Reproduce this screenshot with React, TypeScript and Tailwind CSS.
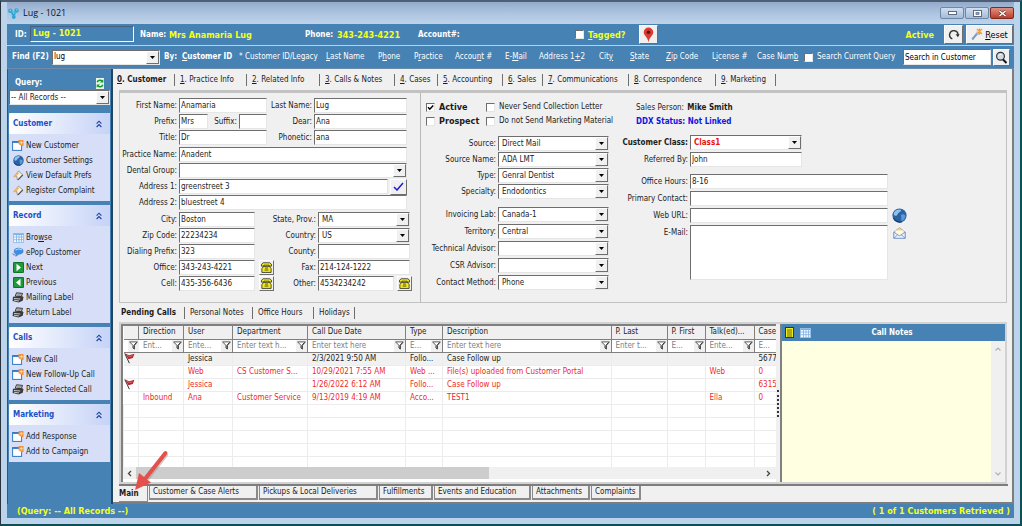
import { useId, type ReactNode } from "react";
import clsx from "clsx";

// "&" marks the accelerator key of a caption, as in "&Customer ID"
function Caption({ text }: { text: string }) {
  const at = text.indexOf("&");
  if (at < 0 || text[at + 1] === " ") return <>{text}</>;
  return (
    <>
      {text.slice(0, at)}
      <span className="underline">{text[at + 1]}</span>
      {text.slice(at + 2)}
    </>
  );
}

const sunken =
  "border border-t-[#6e6e6e] border-l-[#6e6e6e] border-r-[#e6e6e6] border-b-[#e6e6e6] bg-white";
const raised =
  "border border-t-white border-l-white border-r-[#6e6e6e] border-b-[#6e6e6e] bg-[#f0f0f0]";

type FieldProps = {
  label: string;
  value?: string;
  labelClass: string;
  boxClass: string;
  select?: boolean;
  bold?: boolean;
};

function SelectBox({
  id,
  value = "",
  className,
  textClass,
}: {
  id: string;
  value?: string;
  className: string;
  textClass?: string;
}) {
  return (
    <div className={clsx("relative h-[15px] shrink-0", sunken, className)}>
      <select
        id={id}
        defaultValue={value}
        className={clsx(
          "block h-full w-full appearance-none bg-transparent pr-3.5 outline-none",
          textClass ?? "pl-[3px]",
        )}
      >
        <option value={value}>{value}</option>
      </select>
      <span
        className={clsx(
          "pointer-events-none absolute top-0 right-0 flex h-full w-[13px] items-center justify-center",
          raised,
        )}
      >
        <svg width="5" height="3" viewBox="0 0 5 3">
          <path d="M0 0h5L2.5 3z" fill="#000" />
        </svg>
      </span>
    </div>
  );
}

function Field({
  label,
  value = "",
  labelClass,
  boxClass,
  select,
  bold,
}: FieldProps) {
  const id = useId();
  return (
    <>
      <label
        htmlFor={id}
        className={clsx(
          "mr-0.5 shrink-0 text-right",
          labelClass,
          bold && "font-bold",
        )}
      >
        {label}
      </label>
      {select ? (
        <SelectBox
          id={id}
          value={value}
          className={boxClass}
          textClass={bold ? "pl-[3px] font-bold text-[#ed1010]" : undefined}
        />
      ) : (
        <input
          id={id}
          defaultValue={value}
          className={clsx("h-[15px] min-w-0 px-px", sunken, boxClass)}
        />
      )}
    </>
  );
}

function Row({ children }: { children: ReactNode }) {
  return <div className="flex h-[15px] items-center">{children}</div>;
}

function CheckBox({
  label,
  checked,
  className,
}: {
  label: string;
  checked?: boolean;
  className?: string;
}) {
  return (
    <label className={clsx("flex items-center gap-1", className)}>
      <span className="relative size-[9px] shrink-0">
        <input
          type="checkbox"
          defaultChecked={checked}
          className={clsx("peer block size-[9px] appearance-none", sunken)}
        />
        <svg
          className="pointer-events-none absolute top-0 left-0 hidden peer-checked:block"
          width="9"
          height="9"
          viewBox="0 0 9 9"
        >
          <path
            d="M2 4.2l1.8 2L7.2 2.4"
            fill="none"
            stroke="#000"
            strokeWidth="1.5"
          />
        </svg>
      </span>
      <span>
        <Caption text={label} />
      </span>
    </label>
  );
}

/* ---------- icons ---------- */

function WindowIcon() {
  return (
    <svg width="12" height="11" viewBox="0 0 12 11">
      <rect x=".6" y="1.6" width="9" height="8.8" fill="#fff" stroke="#2f77c9" />
      <path d="M.6 2.1h7" stroke="#2f77c9" strokeWidth="1.6" />
      <path d="M6.500 0h5v6H9.500L6.500 4z" fill="#f0913a" />
      <path d="M9.300 1v3.500M7.500 2.700h3.600" stroke="#ffe3a8" strokeWidth=".8" />
    </svg>
  );
}

function GlobeIcon({ size = 11 }: { size?: number }) {
  return (
    <svg width={size} height={size} viewBox="0 0 12 12">
      <circle cx="6" cy="6" r="5.700" fill="#2b62a6" />
      <path d="M1.500 4C3 1 6 .8 7.500 1.600 7 3.500 5 3.300 4.500 5c-.5 1.300-2 1.500-3 .8z" fill="#8fc1ea" />
      <path d="M7 5.500c1.500-1 3-.5 3.800.6-.2 2-1.300 3.500-3 4.300-.9-1.300.2-2.400-.8-4.900z" fill="#5b9ad4" />
      <path d="M1.200 8.200C2.800 11 6 11.800 8 11" stroke="#173a6b" fill="none" />
    </svg>
  );
}

function TagIcon() {
  return (
    <svg width="12" height="11" viewBox="0 0 12 11">
      <path d="M6.500 1l4.300 4-5.300 5-.8-3.600L2 6.500z" fill="#f6f1e4" stroke="#8a8577" strokeWidth=".8" />
      <path d="M1 6.800l4.500-5 1.600 1.400L3 7.500z" fill="#e8b765" />
      <path d="M6 9.800L10.800 5" stroke="#555" strokeWidth="1.200" />
    </svg>
  );
}

function GridIcon() {
  return (
    <svg width="11" height="10" viewBox="0 0 11 10">
      <rect x=".5" y=".5" width="10" height="9" fill="#f4faff" stroke="#9cc3ea" />
      <path d="M.5 1.300h10" stroke="#7fb0e2" strokeWidth="1.500" />
      <path d="M.5 4h10M.5 6.700h10M3.500 1v8.500M6 1v8.500M8.500 1v8.500" stroke="#7fb0e2" strokeWidth=".8" />
    </svg>
  );
}

function ChatIcon() {
  return (
    <svg width="12" height="11" viewBox="0 0 12 11">
      <path d="M6.500.8c3 0 5 1.300 5 3.300S9.500 7.500 7 7.500L3.500 10l.6-2.800C2.500 6.600 1.800 5.500 1.800 4.200 1.800 2.200 3.700.8 6.500.8z" fill="#3f8ede" />
      <path d="M3.500 3.200C5 1.800 8 1.700 9.800 2.700" stroke="#b7dbfa" strokeWidth="1.200" fill="none" />
      <path d="M.5 6.500c1 1.600 3 1.800 4 1.600" stroke="#7a8fb5" strokeWidth="1.200" fill="none" />
    </svg>
  );
}

function PlayIcon({ back }: { back?: boolean }) {
  return (
    <svg width="11" height="11" viewBox="0 0 11 11">
      <rect width="11" height="11" rx="1" fill="#1f9a3a" />
      <rect x=".5" y=".5" width="10" height="10" rx="1" fill="none" stroke="#0e7325" />
      <path d={back ? "M7.500 1.800v7.400L3 5.500z" : "M3.500 1.800v7.400L8 5.500z"} fill="#fff" />
    </svg>
  );
}

function PrinterIcon() {
  return (
    <svg width="12" height="11" viewBox="0 0 12 11">
      <path d="M4.500.8l6 .6-1.200 3.200-6-.4z" fill="#ddd" stroke="#222" strokeWidth=".9" />
      <path d="M1 4.800l9.500-.5 1 1-.8 3.500-4 1.700L.6 9z" fill="#3a3a3a" />
      <path d="M2 6.500l6.300.5M2 8.200l5 .8" stroke="#d8d8d8" strokeWidth=".9" />
      <path d="M5.300 2l4 .4M4.900 3.200l3.600.3" stroke="#555" strokeWidth=".6" />
    </svg>
  );
}

function FunnelIcon() {
  return (
    <svg width="9" height="9" viewBox="0 0 9 9">
      <path d="M.6.900h7.800L5.400 4.300v3.800L3.900 7V4.300z" fill="#fff" stroke="#4a4a4a" strokeWidth=".9" />
      <path d="M5 4.300v3.500M5.200 4.200L7.500 1.500" stroke="#333" strokeWidth="1" />
    </svg>
  );
}

function FlagIcon() {
  return (
    <svg width="11" height="11" viewBox="0 0 11 11">
      <path d="M1 .5l4.200 1.800L10.500.8 8.800 5 4.500 6.300z" fill="#b3262b" />
      <path d="M3 2.300l2.500 1.400 3-1" stroke="#e06a6a" fill="none" />
      <path d="M.8.500l4.600 9.700" stroke="#333" strokeWidth="1" />
    </svg>
  );
}

function PhoneIcon() {
  return (
    <svg width="11" height="11" viewBox="0 0 10 10">
      <path d="M.5 3.800V2L2 .7h6L9.500 2v1.800H7.300V2.900H2.700v.9z" fill="#f4ea18" stroke="#222" strokeWidth=".7" />
      <path d="M2.300 4h5.400l1.500 2v3.500H.8V6z" fill="#f4ea18" stroke="#222" strokeWidth=".7" />
      <path d="M3.700 5.500h2.600M3.300 7.300h3.400" stroke="#222" strokeWidth=".7" />
    </svg>
  );
}

function ChevronsUp() {
  return (
    <svg width="6" height="8" viewBox="0 0 6 8" fill="none" stroke="#1c3f9e">
      <path d="M.6 3.600L3 1.200l2.400 2.400M.6 7L3 4.600 5.400 7" strokeWidth="1.100" />
    </svg>
  );
}

/* ---------- header ---------- */

function TitleBar() {
  return (
    <div className="flex h-[22px] shrink-0 items-center bg-linear-to-b from-[#93aacb] via-[#adc4e0] to-[#bed3ea] pl-px">
      <svg width="11" height="11" viewBox="0 0 11 11">
        <g fill="#2fa5cf">
          <circle cx="2.300" cy="2.800" r="2.200" />
          <circle cx="8.500" cy="2.500" r="2.200" />
          <circle cx="5.500" cy="5.600" r="2.200" />
          <circle cx="5.800" cy="9" r="1.900" />
        </g>
        <path d="M1.500 2.200h1.500M8 1.900h1.300M5 5h1.300" stroke="#a9e2f5" />
      </svg>
      <h1 className="ml-1 font-['Open_Sans','Noto_Sans',sans-serif] text-[9px] text-[#111]">
        Lug - 1021
      </h1>
      <div className="ml-auto flex gap-px">
        <button aria-label="Minimize" className="flex h-3 w-6 items-center justify-center rounded-[2px] border border-[#6f86a5] bg-linear-to-b from-[#d0dff0] to-[#a5bcd8]">
          <svg width="9" height="4" viewBox="0 0 9 4">
            <rect x=".5" y=".5" width="8" height="3" fill="#fff" stroke="#5b6b80" />
          </svg>
        </button>
        <button aria-label="Maximize" className="flex h-3 w-6 items-center justify-center rounded-[2px] border border-[#6f86a5] bg-linear-to-b from-[#d0dff0] to-[#a5bcd8]">
          <svg width="9" height="7" viewBox="0 0 9 7">
            <rect x=".5" y=".5" width="8" height="6" fill="#fff" stroke="#5b6b80" />
            <rect x="3" y="2.500" width="3" height="2" fill="#8fa6c4" stroke="#5b6b80" strokeWidth=".7" />
          </svg>
        </button>
        <button aria-label="Close" className="flex h-3 w-6 items-center justify-center rounded-[2px] border border-[#7a2b22] bg-linear-to-b from-[#dd9084] to-[#c03a24]">
          <svg width="9" height="7" viewBox="0 0 9 7">
            <path d="M1.500 1l6 5M7.500 1l-6 5" stroke="#5c2a2a" strokeWidth="2.600" />
            <path d="M1.500 1l6 5M7.500 1l-6 5" stroke="#fff" strokeWidth="1.600" />
          </svg>
        </button>
      </div>
    </div>
  );
}

function CustomerBar() {
  return (
    <div className="flex h-[22px] shrink-0 items-center border-b border-[#b9d0e6] bg-[#4682b4] pl-2 text-[9px] font-bold text-white">
      <span className="w-[15px] text-[8px]">ID:</span>
      <span className="mb-0.5 h-4 w-[104px] border border-t-[#44607c] border-r-white border-b-white border-l-[#44607c] pl-0.5 leading-[13px] text-[#f4ff1c]">
        Lug - 1021
      </span>
      <span className="ml-1.5 w-[29px] text-[8px]">Name:</span>
      <span className="w-[136px] text-[#f4ff1c]">Mrs Anamaria Lug</span>
      <span className="w-8 text-[8px]">Phone:</span>
      <span className="w-[81px] text-[#f4ff1c]">343-243-4221</span>
      <span className="w-[157px] text-[8px]">Account#:</span>
      <CheckBox label="&Tagged?" className="w-16 text-[#f4ff1c]" />
      <button aria-label="Show on map" className={clsx("flex size-[19px] items-center justify-center", raised)}>
        <svg width="11" height="16" viewBox="0 0 11 16">
          <path d="M5.500.5a4.800 4.800 0 0 1 4.800 4.800C10.300 8.500 6.200 10 5.500 15.500 4.800 10 .7 8.500.7 5.300A4.800 4.800 0 0 1 5.500.5z" fill="#dc3a31" />
          <circle cx="5.500" cy="5.200" r="1.800" fill="#5f130f" />
        </svg>
      </button>
      <span className="ml-auto text-[#f4ff1c]">Active</span>
      <button aria-label="Refresh" className={clsx("ml-2.5 flex size-[19px] items-center justify-center", raised)}>
        <svg width="12" height="12" viewBox="0 0 12 12">
          <path d="M4.300 9.800A4.200 4.200 0 1 1 10 6" fill="none" stroke="#333" strokeWidth="1.400" />
          <path d="M7.600 5.300h4L9.900 8.300z" fill="#333" />
        </svg>
      </button>
      <button className={clsx("mr-px ml-[3px] flex h-[19px] w-[47px] items-center justify-center gap-0.5 font-normal text-black", raised)}>
        <svg width="12" height="13" viewBox="0 0 12 13">
          <path d="M1.200 11.500L6.500 5" stroke="#7d9dc4" strokeWidth="2" />
          <path d="M5.500 3.500L8.500 6.800" stroke="#c7ced8" strokeWidth="2.200" />
          <path d="M6 1l5 5M11 1L6.500 5.500M8.500.5v6" stroke="#ee9a3c" strokeWidth="1.300" />
        </svg>
        <span>
          <Caption text="&Reset" />
        </span>
      </button>
    </div>
  );
}

const searchKeys = [
  { text: "Customer ID/Legacy", className: "w-[81px]" },
  { text: "&Last Name", className: "w-[52px]" },
  { text: "P&hone", className: "w-9" },
  { text: "P&ractice", className: "w-[41px]" },
  { text: "Accou&nt #", className: "w-[50px]" },
  { text: "E-&Mail", className: "w-[34px]" },
  { text: "Address 1&+2", className: "w-[60px]" },
  { text: "Cit&y", className: "w-[31px]" },
  { text: "&State", className: "w-9" },
  { text: "&Zip Code", className: "w-[46px]" },
  { text: "L&icense #", className: "w-[45px]" },
  { text: "Case Num&b", className: "w-[45px]" },
];

function SearchBar() {
  return (
    <div className="flex h-[23px] shrink-0 items-center border-b border-[#6d8ba8] bg-[#4682b4] pl-[5px] whitespace-nowrap text-white">
      <label htmlFor="find" className="w-10 font-bold">
        Find (F2)
      </label>
      <div className="text-black">
        <SelectBox id="find" value="lug" className="w-[108px]" textClass="pl-px" />
      </div>
      <span className="ml-1 w-[18px] font-bold">By:</span>
      <button className="w-[57px] text-left font-bold">
        <Caption text="&Customer ID" />
      </button>
      <span className="w-1.5">*</span>
      {searchKeys.map((key) => (
        <button key={key.text} className={clsx("text-left", key.className)}>
          <Caption text={key.text} />
        </button>
      ))}
      <CheckBox label="Search Current Query" className="ml-0.5" />
      <input
        aria-label="Search scope"
        defaultValue="Search in Customer"
        className={clsx("ml-auto h-4 w-[88px] px-px text-black", sunken)}
      />
      <button aria-label="Search" className={clsx("mr-1 ml-0.5 flex size-[17px] items-center justify-center", raised)}>
        <svg width="13" height="13" viewBox="0 0 13 13">
          <circle cx="5.500" cy="5.200" r="3.900" fill="#cfdbe6" stroke="#333" strokeWidth="1.200" />
          <path d="M8 8.500l3.500 3.500" stroke="#111" strokeWidth="2" />
          <path d="M4 4.500c.5-1 1.500-1.200 2.500-1" stroke="#fff" fill="none" />
        </svg>
      </button>
    </div>
  );
}

/* ---------- sidebar ---------- */

const groups = [
  {
    title: "Customer",
    items: [
      { text: "New Customer", icon: <WindowIcon /> },
      { text: "Customer Settings", icon: <GlobeIcon /> },
      { text: "View Default Prefs", icon: <TagIcon /> },
      { text: "Register Complaint", icon: <TagIcon /> },
    ],
  },
  {
    title: "Record",
    items: [
      { text: "Bro&wse", icon: <GridIcon /> },
      { text: "ePop Customer", icon: <ChatIcon /> },
      { text: "Next", icon: <PlayIcon /> },
      { text: "Previous", icon: <PlayIcon back /> },
      { text: "Mailing Label", icon: <PrinterIcon /> },
      { text: "Return Label", icon: <PrinterIcon /> },
    ],
  },
  {
    title: "Calls",
    items: [
      { text: "New Call", icon: <WindowIcon /> },
      { text: "New Follow-Up Call", icon: <WindowIcon /> },
      { text: "Print Selected Call", icon: <PrinterIcon /> },
    ],
  },
  {
    title: "Marketing",
    items: [
      { text: "Add Response", icon: <WindowIcon /> },
      { text: "Add to Campaign", icon: <WindowIcon /> },
    ],
  },
];

function Sidebar() {
  return (
    <aside className="w-[106px] shrink-0 border-r-2 border-l border-r-[#1f4565] border-l-[#2c5678] bg-[#4682b4] px-px pt-[7px]">
      <div className="flex h-3.5 items-center justify-between px-1.5 font-bold text-white">
        <label htmlFor="query">Query:</label>
        <svg width="8" height="11" viewBox="0 0 8 11">
          <rect width="8" height="11" fill="#e9f7ea" />
          <path d="M1.200 4.200C1.800 2 5 1.500 6 3.200M6.800 6.800C6.200 9 3 9.500 2 7.800" fill="none" stroke="#129a2d" strokeWidth="1.500" />
          <path d="M4 4.500h3.300V1.300zM4 6.500H.7v3.200z" fill="#129a2d" />
        </svg>
      </div>
      <SelectBox id="query" value="-- All Records --" className="w-full" textClass="pl-px" />
      <div className="mt-2 flex flex-col gap-1">
        {groups.map((group) => (
          <section key={group.title} className="bg-[#d6dff7]">
            <header className="flex h-[21px] items-center justify-between rounded-t-[3px] bg-linear-to-r from-white to-[#c6d3f7] pr-2 pl-1">
              <h2 className="font-bold text-[#1c50c8]">{group.title}</h2>
              <ChevronsUp />
            </header>
            <ul className="pt-1 pb-[3px] pl-[3px]">
              {group.items.map((item) => (
                <li key={item.text} className="h-[15px]">
                  <button className="flex h-full items-center gap-0.5">
                    <span className="flex w-3 shrink-0 justify-center">{item.icon}</span>
                    <span className="whitespace-nowrap">
                      <Caption text={item.text} />
                    </span>
                  </button>
                </li>
              ))}
            </ul>
          </section>
        ))}
      </div>
    </aside>
  );
}

/* ---------- tabs ---------- */

type Tab = { text: string; className: string };

const mainTabs: Tab[] = [
  { text: "&0. Customer", className: "w-[59px]" },
  { text: "&1. Practice Info", className: "w-[72px]" },
  { text: "&2. Related Info", className: "w-[73px]" },
  { text: "&3. Calls & Notes", className: "w-[75px]" },
  { text: "&4. Cases", className: "w-[43px]" },
  { text: "&5. Accounting", className: "w-[65px]" },
  { text: "&6. Sales", className: "w-10" },
  { text: "&7. Communications", className: "w-[86px]" },
  { text: "&8. Correspondence", className: "w-[87px]" },
  { text: "&9. Marketing", className: "w-[60px]" },
];

const callTabs: Tab[] = [
  { text: "Pending Calls", className: "w-[65px]" },
  { text: "Personal Notes", className: "w-[68px]" },
  { text: "Office Hours", className: "w-[61px]" },
  { text: "Holidays", className: "w-[41px]" },
];

function TabStrip({ tabs, className }: { tabs: Tab[]; className: string }) {
  return (
    <div role="tablist" className={clsx("flex items-center", className)}>
      {tabs.map((tab, i) => (
        <button
          key={tab.text}
          role="tab"
          aria-selected={i === 0}
          className={clsx(
            "h-3 shrink-0 border-r border-[#6e6e6e] text-left leading-3 whitespace-nowrap",
            i === 0 ? "pl-px font-bold" : "pl-[5px]",
            tab.className,
          )}
        >
          <Caption text={tab.text} />
        </button>
      ))}
    </div>
  );
}

const bottomTabs: Tab[] = [
  { text: "Customer & Case Alerts", className: "w-[109px]" },
  { text: "Pickups & Local Deliveries", className: "w-[119px]" },
  { text: "Fulfillments", className: "w-[54px]" },
  { text: "Events and Education", className: "w-[97px]" },
  { text: "Attachments", className: "w-[58px]" },
  { text: "Complaints", className: "w-[50px]" },
];

function BottomTabs() {
  return (
    <div role="tablist" className="mr-1 ml-1.5 flex h-[18px] items-start gap-px border-t-2 border-[#7d7d7d]">
      <button
        role="tab"
        aria-selected
        className="h-4 w-[29px] border-r border-b border-[#8a8a8a] text-left leading-[13px] font-bold"
      >
        Main
      </button>
      {bottomTabs.map((tab) => (
        <button
          key={tab.text}
          role="tab"
          aria-selected={false}
          className={clsx(
            "h-3.5 border-r-2 border-b-2 border-l border-[#8a8a8a] pl-[3px] text-left leading-3 whitespace-nowrap",
            tab.className,
          )}
        >
          {tab.text}
        </button>
      ))}
    </div>
  );
}

/* ---------- customer form ---------- */

function DialButton({ label }: { label: string }) {
  return (
    <button aria-label={label} className={clsx("flex size-[15px] shrink-0 items-center justify-center", raised)}>
      <PhoneIcon />
    </button>
  );
}

const L = "w-[57px]";
const R = "ml-0.5 w-[43px]";
const R2 = "ml-0.5 w-[59px]";

function AddressForm() {
  return (
    <div className="flex w-[301px] shrink-0 flex-col gap-px border-r border-[#b8b8b8] pt-[5px]">
      <Row>
        <Field label="First Name:" value="Anamaria" labelClass={L} boxClass="w-[88px]" />
        <Field label="Last Name:" value="Lug" labelClass={R} boxClass="w-[93px]" />
      </Row>
      <Row>
        <Field label="Prefix:" value="Mrs" labelClass={L} boxClass="w-[29px]" />
        <Field label="Suffix:" labelClass="w-[29px]" boxClass="w-7" />
        <Field label="Dear:" value="Ana" labelClass={R} boxClass="w-[93px]" />
      </Row>
      <Row>
        <Field label="Title:" value="Dr" labelClass={L} boxClass="w-[88px]" />
        <Field label="Phonetic:" value="ana" labelClass={R} boxClass="w-[93px]" />
      </Row>
      <div className="mt-px flex flex-col gap-px">
        <Row>
          <Field label="Practice Name:" value="Anadent" labelClass={L} boxClass="w-[228px]" />
        </Row>
        <Row>
          <Field select label="Dental Group:" labelClass={L} boxClass="w-[228px]" />
        </Row>
        <Row>
          <Field label="Address 1:" value="greenstreet 3" labelClass={L} boxClass="w-[209px]" />
          <button aria-label="Verify address" className={clsx("ml-0.5 flex h-4 w-[17px] items-center justify-center", raised)}>
            <svg width="11" height="9" viewBox="0 0 11 9">
              <path d="M1 5l3 3L10 1" fill="none" stroke="#1a1ae0" strokeWidth="1.500" />
            </svg>
          </button>
        </Row>
        <Row>
          <Field label="Address 2:" value="bluestreet 4" labelClass={L} boxClass="w-[228px]" />
        </Row>
      </div>
      <div className="mt-px flex flex-col gap-px">
        <Row>
          <Field label="City:" value="Boston" labelClass={L} boxClass="w-[76px]" />
          <Field select label="State, Prov.:" value="MA" labelClass={R2} boxClass="w-[92px]" />
        </Row>
        <Row>
          <Field label="Zip Code:" value="22234234" labelClass={L} boxClass="w-[76px]" />
          <Field select label="Country:" value="US" labelClass={R2} boxClass="w-[92px]" />
        </Row>
        <Row>
          <Field label="Dialing Prefix:" value="323" labelClass={L} boxClass="w-[76px]" />
          <Field label="County:" labelClass={R2} boxClass="w-[92px]" />
        </Row>
        <Row>
          <Field label="Office:" value="343-243-4221" labelClass={L} boxClass="mr-1 w-[76px]" />
          <DialButton label="Dial office" />
          <Field label="Fax:" value="214-124-1222" labelClass="w-[42px]" boxClass="w-[92px]" />
        </Row>
        <Row>
          <Field label="Cell:" value="435-356-6436" labelClass={L} boxClass="mr-1 w-[76px]" />
          <DialButton label="Dial cell" />
          <Field label="Other:" value="4534234242" labelClass="w-[42px]" boxClass="mr-[3px] w-[76px]" />
          <DialButton label="Dial other" />
        </Row>
      </div>
    </div>
  );
}

const sourceFields = [
  ["Source:", "Direct Mail"],
  ["Source Name:", "ADA LMT"],
  ["Type:", "Genral Dentist"],
  ["Specialty:", "Endodontics"],
];

const staffFields = [
  ["Invoicing Lab:", "Canada-1"],
  ["Territory:", "Central"],
  ["Technical Advisor:", ""],
  ["CSR Advisor:", ""],
  ["Contact Method:", "Phone"],
];

function StatusForm() {
  return (
    <div className="w-[199px] shrink-0 pt-[9px] pl-[5px]">
      <div className="grid grid-cols-[60px_1fr] gap-y-1 leading-[10px] whitespace-nowrap">
        <CheckBox label="Active" checked className="text-[9px] font-bold" />
        <CheckBox label="Never Send Collection Letter" />
        <CheckBox label="Prospect" className="text-[9px] font-bold" />
        <CheckBox label="Do not Send Marketing Material" />
      </div>
      <div className="mt-2.5 flex flex-col gap-px">
        {sourceFields.map(([label, value]) => (
          <Row key={label}>
            <Field select label={label} value={value} labelClass="w-[70px]" boxClass="w-[111px]" />
          </Row>
        ))}
      </div>
      <div className="mt-2 flex flex-col gap-0.5">
        {staffFields.map(([label, value]) => (
          <Row key={label}>
            <Field select label={label} value={value} labelClass="w-[70px]" boxClass="w-[111px]" />
          </Row>
        ))}
      </div>
    </div>
  );
}

function ContactForm() {
  return (
    <div className="min-w-0 flex-1 pt-2">
      <div className="pl-4 leading-[14px]">
        <p>
          Sales Person: <b className="ml-px">Mike Smith</b>
        </p>
        <p className="font-bold text-[#1414e6]">DDX Status: Not Linked</p>
      </div>
      <div className="mt-1.5 flex flex-col gap-0.5">
        <Row>
          <Field select bold label="Customer Class:" value="Class1" labelClass="w-[68px]" boxClass="w-[112px]" />
        </Row>
        <Row>
          <Field label="Referred By:" value="John" labelClass="w-[68px]" boxClass="w-[112px]" />
        </Row>
      </div>
      <div className="mt-[7px] flex flex-col gap-0.5">
        <Row>
          <Field label="Office Hours:" value="8-16" labelClass="w-[68px]" boxClass="w-[198px]" />
        </Row>
        <Row>
          <Field label="Primary Contact:" labelClass="w-[68px]" boxClass="w-[198px]" />
        </Row>
        <Row>
          <Field label="Web URL:" labelClass="w-[68px]" boxClass="w-[198px]" />
          <button aria-label="Open website" className="ml-1">
            <GlobeIcon size={15} />
          </button>
        </Row>
        <div className="flex items-start">
          <label htmlFor="email" className="mr-0.5 w-[68px] text-right leading-[15px]">
            E-Mail:
          </label>
          <textarea id="email" className={clsx("h-[55px] w-[198px] resize-none", sunken)} />
          <button aria-label="Send e-mail" className="mt-0.5 ml-[5px]">
            <svg width="13" height="12" viewBox="0 0 13 12">
              <path d="M.8 5L6.500.7 12.200 5v6.300H.8z" fill="#f6d58a" stroke="#a9a58e" strokeWidth=".8" />
              <path d="M2.500 3.500h8V8h-8z" fill="#fff8e2" />
              <path d="M.8 5.200l5.700 3.600 5.700-3.600v6.100H.8z" fill="#e9f1fd" stroke="#6b8ed0" strokeWidth=".8" />
              <path d="M1 11l4-3.500M12 11L8 7.500" stroke="#6b8ed0" strokeWidth=".8" />
            </svg>
          </button>
        </div>
      </div>
    </div>
  );
}

/* ---------- pending calls ---------- */

const columns = [
  { title: "", hint: "", className: "w-[15px]" },
  { title: "Direction", hint: "Ent...", className: "w-[45px]" },
  { title: "User", hint: "Ente...", className: "w-[49px]" },
  { title: "Department", hint: "Enter text h...", className: "w-[75px]" },
  { title: "Call Due Date", hint: "Enter text here", className: "w-[98px]" },
  { title: "Type", hint: "E...", className: "w-[37px]" },
  { title: "Description", hint: "Enter text here", className: "w-auto" },
  { title: "P. Last", hint: "Enter t...", className: "w-14" },
  { title: "P. First", hint: "E...", className: "w-[38px]" },
  { title: "Talk(ed)...", hint: "Ente...", className: "w-[49px]" },
  { title: "Case", hint: "E...", className: "w-[22px]" },
];

const calls = [
  { flag: true, cells: ["", "Jessica", "", "2/3/2021 9:50 AM", "Follo...", "Case Follow up", "", "", "", "5677"] },
  { flag: false, cells: ["", "Web", "CS Customer S...", "10/29/2021 7:55 AM", "Web ...", "File(s) uploaded from Customer Portal", "", "", "Web", "0"] },
  { flag: true, cells: ["", "Jessica", "", "1/26/2022 6:12 AM", "Follo...", "Case Follow up", "", "", "", "6315"] },
  { flag: false, cells: ["Inbound", "Ana", "Customer Service", "9/13/2019 4:19 AM", "Acco...", "TEST1", "", "", "Ella", "0"] },
];

const blankRows = Array.from({ length: 5 }, () => columns.map(() => ""));

function CallsTable() {
  const last = columns.length - 1;
  return (
    <div className="flex min-w-0 flex-1 flex-col border-t-2 border-l-2 border-[#808080] bg-white">
      <div className="h-[141px] overflow-hidden">
        <table className="w-full table-fixed border-collapse">
          <colgroup>
            {columns.map((col, i) => (
              <col key={i} className={col.className} />
            ))}
          </colgroup>
          <thead>
            <tr className="h-[13px] bg-[#f0f0f0]">
              {columns.map((col, i) => (
                <th
                  key={i}
                  className={clsx(
                    "border-r border-b border-[#808080] py-0 pl-1 text-left leading-3 font-normal whitespace-nowrap",
                    i === last && "border-r-0",
                  )}
                >
                  {col.title}
                </th>
              ))}
            </tr>
            <tr className="h-[13px] bg-white">
              {columns.map((col, i) => (
                <td key={i} className={clsx("border-r border-b border-[#808080] p-0", i === last && "border-r-0")}>
                  <div className="flex h-3 items-center pl-1">
                    {i > 0 && (
                      <input
                        aria-label={`Filter ${col.title}`}
                        placeholder={col.hint}
                        className="h-3 min-w-0 flex-1 placeholder:text-[#808080]"
                      />
                    )}
                    {i < last && (
                      <span className="flex h-3 w-[11px] shrink-0 items-center justify-center bg-[#f0f0f0]">
                        <FunnelIcon />
                      </span>
                    )}
                  </div>
                </td>
              ))}
            </tr>
          </thead>
          <tbody>
            {calls.map((call, row) => (
              <tr key={row} className={clsx("h-[13px]", row === 0 ? "bg-[#f1f1f1]" : "text-[#f02a2a]")}>
                <td className="border-b border-[#ececec] p-0">{call.flag && <FlagIcon />}</td>
                {call.cells.map((cell, i) => (
                  <td
                    key={i}
                    className="border-b border-l border-[#ececec] py-0 pl-1 leading-3 whitespace-nowrap"
                  >
                    {cell}
                  </td>
                ))}
              </tr>
            ))}
            {blankRows.map((cells, row) => (
              <tr key={row} className="h-[13px]">
                {cells.map((_, i) => (
                  <td key={i} className="border-b border-l border-[#ececec] p-0" />
                ))}
              </tr>
            ))}
          </tbody>
        </table>
      </div>
      <div className="flex h-3 items-center bg-[#f0f0f0]">
        <svg width="13" height="7" viewBox="0 0 13 7">
          <path d="M8 1L5.500 3.500 8 6" fill="none" stroke="#444" strokeWidth="1.300" />
        </svg>
        <div className="h-full w-[54%] bg-[#cdcdcd]" />
        <svg className="ml-auto" width="14" height="7" viewBox="0 0 14 7">
          <path d="M5 1l2.500 2.500L5 6" fill="none" stroke="#444" strokeWidth="1.300" />
        </svg>
      </div>
    </div>
  );
}

function CallNotes() {
  return (
    <section className="flex w-[225px] shrink-0 flex-col border-l-2 border-[#808080]">
      <header className="flex h-[17px] items-center bg-[#4682b4] pl-[3px]">
        <svg width="9" height="11" viewBox="0 0 9 11">
          <rect x=".5" y=".5" width="8" height="10" fill="#f1ec1e" stroke="#333" />
          <path d="M2 3h5M2 5h5M2 7h5M2 9h5" stroke="#6a6a10" />
        </svg>
        <span className="ml-1.5">
          <GridIcon />
        </span>
        <h2 className="flex-1 pr-8 text-center font-bold text-white">Call Notes</h2>
      </header>
      <div className="flex flex-1">
        <textarea aria-label="Call Notes" className="min-w-0 flex-1 resize-none bg-[#ffffe1]" />
        <div className="flex w-3.5 flex-col items-center justify-between bg-[#f0f0f0] py-1.5">
          <svg width="6" height="4" viewBox="0 0 6 4">
            <path d="M.5 3.500L3 1l2.500 2.500" fill="none" stroke="#b0b0b0" strokeWidth="1.200" />
          </svg>
          <svg width="6" height="4" viewBox="0 0 6 4">
            <path d="M.5.5L3 3 5.500.5" fill="none" stroke="#b0b0b0" strokeWidth="1.200" />
          </svg>
        </div>
      </div>
    </section>
  );
}

export default function App() {
  return (
    <div className="relative flex min-h-screen flex-col border-t-2 border-r-2 border-b-2 border-l border-t-[#4d5f75] border-r-[#0d4f55] border-b-[#0d4f55] border-l-[#28313c] bg-[#bcd3ec] px-1.5 font-['DejaVu_Sans_Condensed','DejaVu_Sans',sans-serif] text-[8px] leading-[10px] text-[#1c1c1c]">
      <TitleBar />
      <CustomerBar />
      <SearchBar />
      <div className="flex flex-1">
        <Sidebar />
        <main className="flex min-w-0 flex-1 flex-col border-r-2 border-b-2 border-[#7d7d7d] bg-[#f0f0f0]">
          <TabStrip tabs={mainTabs} className="h-[21px] pl-[3px]" />
          <div className="mr-[5px] ml-1.5 flex h-[213px] border border-t-[3px] border-[#c2c2c2]">
            <AddressForm />
            <StatusForm />
            <ContactForm />
          </div>
          <TabStrip tabs={callTabs} className="h-[19px] pl-[7px]" />
          <div className="mr-[5px] ml-1.5 flex flex-1 border-2 border-[#d2d2d2]">
            <CallsTable />
            <div className="flex w-1 shrink-0 flex-col items-center justify-center">
              <div className="h-[27px] w-0.5 border-l-2 border-dotted border-[#333]" />
            </div>
            <CallNotes />
          </div>
          <BottomTabs />
        </main>
      </div>
      <footer className="mb-1.5 flex h-3.5 items-center justify-between bg-[#4682b4] pr-1 pl-2.5 text-[9px] font-bold text-[#f4ff1c]">
        <span>(Query: -- All Records --)</span>
        <span>( 1 of 1 Customers Retrieved )</span>
      </footer>

      {/* pointer to the Main tab */}
      <svg className="pointer-events-none absolute bottom-[30px] left-[130px]" width="42" height="46" viewBox="0 0 42 46">
        <path d="M35 7L17 30" stroke="#9a9a9a" strokeOpacity=".5" strokeWidth="4" strokeLinecap="round" />
        <path d="M34.500 5L14 31" stroke="#e4504b" strokeWidth="4" strokeLinecap="round" />
        <path d="M4 42l4-17 12 9.500z" fill="#e4504b" />
      </svg>
    </div>
  );
}
